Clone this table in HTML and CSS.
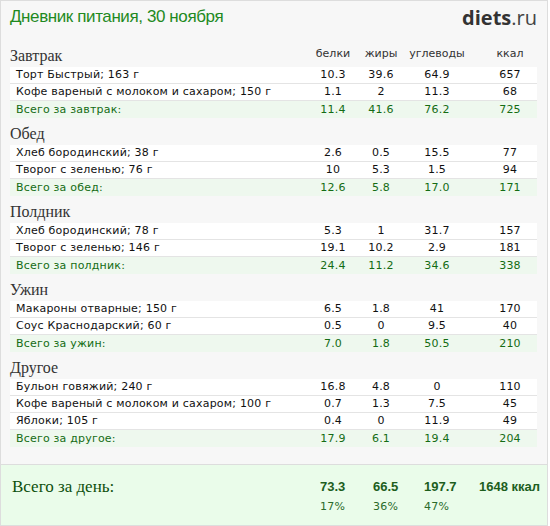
FILE: index.html
```html
<!DOCTYPE html>
<html lang="ru">
<head>
<meta charset="utf-8">
<title>Дневник питания</title>
<link rel="stylesheet" href="styles.css">
</head>
<body>
<div class="page">
  <header class="top">
    <h1 class="title">Дневник питания, 30 ноября</h1>
    <div class="logo"><b>diets</b>.ru</div>
  </header>

  <section class="meal">
    <div class="meal-head">
      <span class="meal-name">Завтрак</span>
      <span class="col">белки</span><span class="col">жиры</span><span class="col">углеводы</span><span class="col kc">ккал</span>
    </div>
    <div class="row"><span class="name">Торт Быстрый; 163 г</span><span>10.3</span><span>39.6</span><span>64.9</span><span class="kc">657</span></div>
    <div class="row"><span class="name">Кофе вареный с молоком и сахаром; 150 г</span><span>1.1</span><span>2</span><span>11.3</span><span class="kc">68</span></div>
    <div class="row total"><span class="name">Всего за завтрак:</span><span>11.4</span><span>41.6</span><span>76.2</span><span class="kc">725</span></div>
  </section>

  <section class="meal">
    <div class="meal-head"><span class="meal-name">Обед</span></div>
    <div class="row"><span class="name">Хлеб бородинский; 38 г</span><span>2.6</span><span>0.5</span><span>15.5</span><span class="kc">77</span></div>
    <div class="row"><span class="name">Творог с зеленью; 76 г</span><span>10</span><span>5.3</span><span>1.5</span><span class="kc">94</span></div>
    <div class="row total"><span class="name">Всего за обед:</span><span>12.6</span><span>5.8</span><span>17.0</span><span class="kc">171</span></div>
  </section>

  <section class="meal">
    <div class="meal-head"><span class="meal-name">Полдник</span></div>
    <div class="row"><span class="name">Хлеб бородинский; 78 г</span><span>5.3</span><span>1</span><span>31.7</span><span class="kc">157</span></div>
    <div class="row"><span class="name">Творог с зеленью; 146 г</span><span>19.1</span><span>10.2</span><span>2.9</span><span class="kc">181</span></div>
    <div class="row total"><span class="name">Всего за полдник:</span><span>24.4</span><span>11.2</span><span>34.6</span><span class="kc">338</span></div>
  </section>

  <section class="meal">
    <div class="meal-head"><span class="meal-name">Ужин</span></div>
    <div class="row"><span class="name">Макароны отварные; 150 г</span><span>6.5</span><span>1.8</span><span>41</span><span class="kc">170</span></div>
    <div class="row"><span class="name">Соус Краснодарский; 60 г</span><span>0.5</span><span>0</span><span>9.5</span><span class="kc">40</span></div>
    <div class="row total"><span class="name">Всего за ужин:</span><span>7.0</span><span>1.8</span><span>50.5</span><span class="kc">210</span></div>
  </section>

  <section class="meal">
    <div class="meal-head"><span class="meal-name">Другое</span></div>
    <div class="row"><span class="name">Бульон говяжий; 240 г</span><span>16.8</span><span>4.8</span><span>0</span><span class="kc">110</span></div>
    <div class="row"><span class="name">Кофе вареный с молоком и сахаром; 100 г</span><span>0.7</span><span>1.3</span><span>7.5</span><span class="kc">45</span></div>
    <div class="row"><span class="name">Яблоки; 105 г</span><span>0.4</span><span>0</span><span>11.9</span><span class="kc">49</span></div>
    <div class="row total"><span class="name">Всего за другое:</span><span>17.9</span><span>6.1</span><span>19.4</span><span class="kc">204</span></div>
  </section>

  <footer class="day">
    <span class="day-label">Всего за день:</span>
    <span class="big">73.3</span><span class="big">66.5</span><span class="big">197.7</span><span class="big">1648 ккал</span>
    <span></span>
    <span class="pct">17%</span><span class="pct">36%</span><span class="pct">47%</span><span></span>
  </footer>
</div>
</body>
</html>
```

FILE: styles.css
```css
html, body {
  margin: 0;
  padding: 0;
  background: #ffffff;
}

.page {
  width: 546px;
  height: 524px;
  border: 1px solid #dddddd;
  background: #f7f7f7;
  display: flex;
  flex-direction: column;
  font-family: "DejaVu Sans", Verdana, sans-serif;
  font-size: 11px;
  color: #111111;
}

.top {
  display: flex;
  justify-content: space-between;
  align-items: flex-start;
  height: 39px;
  padding: 5px 10px 0 9px;
  box-sizing: border-box;
}

.title {
  margin: 0;
  font-family: "Liberation Sans", Arial, sans-serif;
  font-weight: normal;
  font-size: 17px;
  letter-spacing: -0.4px;
  line-height: 22px;
  color: #1f8a1f;
}

.logo {
  font-family: "Open Sans", sans-serif;
  font-size: 20px;
  line-height: 24px;
  color: #444444;
}

.logo b {
  font-weight: 700;
  color: #333333;
}

.meal {
  padding: 0 10px 0 9px;
}

.meal-head,
.row {
  display: grid;
  grid-template-columns: 1fr 48px 48px 64px 68px;
}

.meal-head {
  height: 27px;
  align-items: end;
}

.meal-name {
  font-family: "Liberation Serif", "Times New Roman", serif;
  font-size: 16px;
  line-height: 22px;
  color: #333333;
}

.col {
  text-align: center;
  color: #333333;
  line-height: 22px;
  margin-bottom: 2px;
}

.kc {
  padding-left: 14px;
  text-align: center;
}

.row {
  height: 16px;
  line-height: 16px;
  background: #ffffff;
  border-bottom: 1px solid #e4e4e4;
  align-items: center;
}

.row span {
  text-align: center;
  letter-spacing: 0.2px;
}

.row .name {
  text-align: left;
  padding-left: 6px;
}

.row.total {
  height: 17px;
  border-bottom: 0;
  background: #eef8ee;
  color: #146c14;
}

.day {
  margin-top: auto;
  height: 61px;
  box-sizing: border-box;
  border-top: 1px solid #dddddd;
  background: #eafcea;
  display: grid;
  grid-template-columns: 308px 53px 51px 55px auto;
  grid-template-rows: 22px 18px;
  align-content: start;
  padding: 11px 0 0 11px;
}

.day-label {
  font-family: "Liberation Serif", "Times New Roman", serif;
  font-size: 17px;
  line-height: 22px;
  color: #0d4f0d;
}

.big {
  font-family: "Liberation Sans", Arial, sans-serif;
  font-weight: 700;
  font-size: 13px;
  line-height: 22px;
  color: #1d5e1d;
}

.pct {
  font-size: 11px;
  line-height: 18px;
  color: #2b6b2b;
  letter-spacing: 0.3px;
}
```
